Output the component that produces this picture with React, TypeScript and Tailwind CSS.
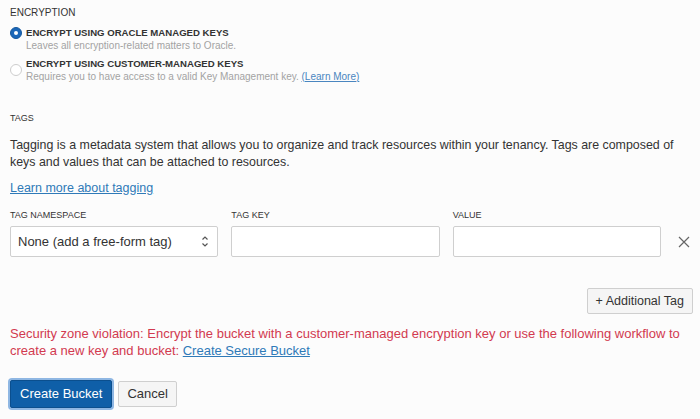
import React, { useState } from "react";

const font = { fontFamily: '"Liberation Sans", Arial, sans-serif' };

const Radio: React.FC<{ checked: boolean; onClick: () => void }> = ({ checked, onClick }) => (
  <button
    type="button"
    onClick={onClick}
    className={
      checked
        ? "w-[12px] h-[12px] rounded-full bg-[#1b67b8] border border-[#15589e] flex items-center justify-center shrink-0"
        : "w-[12px] h-[12px] rounded-full bg-white border border-[#cdcdcd] shrink-0"
    }
  >
    {checked && <span className="w-[4px] h-[4px] rounded-full bg-white" />}
  </button>
);

export default function App() {
  const [mode, setMode] = useState("oracle");
  const [tagKey, setTagKey] = useState("");
  const [tagValue, setTagValue] = useState("");

  return (
    <div className="w-[700px] h-[419px] bg-[#fcfcfc] text-[#333] overflow-hidden px-[10px] pt-[7px]" style={font}>
      <div className="text-[10px] leading-[12px] text-[#333]">ENCRYPTION</div>

      <div className="mt-[8px] flex items-start gap-[4px]">
        <div>
          <Radio checked={mode === "oracle"} onClick={() => setMode("oracle")} />
        </div>
        <div>
          <div className="text-[9.6px] leading-[12px] font-bold text-[#333]">ENCRYPT USING ORACLE MANAGED KEYS</div>
          <div className="mt-[1px] text-[10px] leading-[12px] text-[#a3a3a3]">Leaves all encryption-related matters to Oracle.</div>
        </div>
      </div>

      <div className="mt-[6px] flex items-start gap-[4px]">
        <div>
          <Radio checked={mode === "customer"} onClick={() => setMode("customer")} />
        </div>
        <div>
          <div className="text-[9.6px] leading-[12px] font-bold text-[#333]">ENCRYPT USING CUSTOMER-MANAGED KEYS</div>
          <div className="mt-[1px] text-[10px] leading-[12px] text-[#a3a3a3]">
            Requires you to have access to a valid Key Management key.{" "}
            <a href="#" className="text-[#4a86c0] underline">(Learn More)</a>
          </div>
        </div>
      </div>

      <div className="mt-[29px] text-[9px] leading-[12px] text-[#333]">TAGS</div>

      <p className="mt-[13px] text-[12.4px] leading-[17px] text-[#333]">
        Tagging is a metadata system that allows you to organize and track resources within your tenancy. Tags are composed of
        keys and values that can be attached to resources.
      </p>

      <a href="#" className="block mt-[9px] text-[12.5px] leading-[17px] text-[#2f7ab8] underline">
        Learn more about tagging
      </a>

      <div className="mt-[12px] flex items-end gap-[13px]">
        <div className="w-[209px]">
          <div className="text-[9px] leading-[12px] text-[#333]">TAG NAMESPACE</div>
          <div className="mt-[5px] h-[31px] border border-[#cfcfcf] rounded-[2px] bg-white flex items-center justify-between pl-[7px] pr-[8px]">
            <span className="text-[13px] text-[#333]">None (add a free-form tag)</span>
            <svg width="8" height="13" viewBox="0 0 8 13" fill="none" stroke="#555" strokeWidth="1.2">
              <path d="M1.5 4.5 L4 2 L6.5 4.5" />
              <path d="M1.5 8.5 L4 11 L6.5 8.5" />
            </svg>
          </div>
        </div>
        <div className="w-[209px]">
          <div className="text-[9px] leading-[12px] text-[#333]">TAG KEY</div>
          <input
            value={tagKey}
            onChange={(e) => setTagKey(e.target.value)}
            className="mt-[5px] w-full h-[31px] border border-[#cfcfcf] rounded-[2px] bg-white px-[7px] text-[13px] outline-none"
          />
        </div>
        <div className="w-[209px]">
          <div className="text-[9px] leading-[12px] text-[#333]">VALUE</div>
          <input
            value={tagValue}
            onChange={(e) => setTagValue(e.target.value)}
            className="mt-[5px] w-full h-[31px] border border-[#cfcfcf] rounded-[2px] bg-white px-[7px] text-[13px] outline-none"
          />
        </div>
        <div className="h-[31px] flex items-center pl-[4px]">
          <svg width="12" height="12" viewBox="0 0 12 12" stroke="#666" strokeWidth="1.2">
            <path d="M1 1 L11 11 M11 1 L1 11" />
          </svg>
        </div>
      </div>

      <div className="mt-[31px] flex justify-end">
        <button className="mr-[-3px] h-[26px] px-[8px] border border-[#cfcfcf] rounded-[2px] bg-[#f5f5f5] text-[12.5px] text-[#333]">
          + Additional Tag
        </button>
      </div>

      <p className="mt-[11px] text-[13px] leading-[17px] text-[#d23a50]">
        Security zone violation: Encrypt the bucket with a customer-managed encryption key or use the following workflow to
        create a new key and bucket:{" "}
        <a href="#" className="text-[#2f7ab8] underline">Create Secure Bucket</a>
      </p>

      <div className="mt-[21px] flex items-center gap-[6px]">
        <button className="h-[28px] px-[9px] rounded-[2px] bg-[#0f5fa8] text-white text-[13px] ring-2 ring-[#8fb7e3] border border-[#0b4f8e]">
          Create Bucket
        </button>
        <button className="h-[26px] px-[8px] rounded-[2px] bg-[#f5f5f5] border border-[#cfcfcf] text-[13px] text-[#333]">
          Cancel
        </button>
      </div>
    </div>
  );
}
